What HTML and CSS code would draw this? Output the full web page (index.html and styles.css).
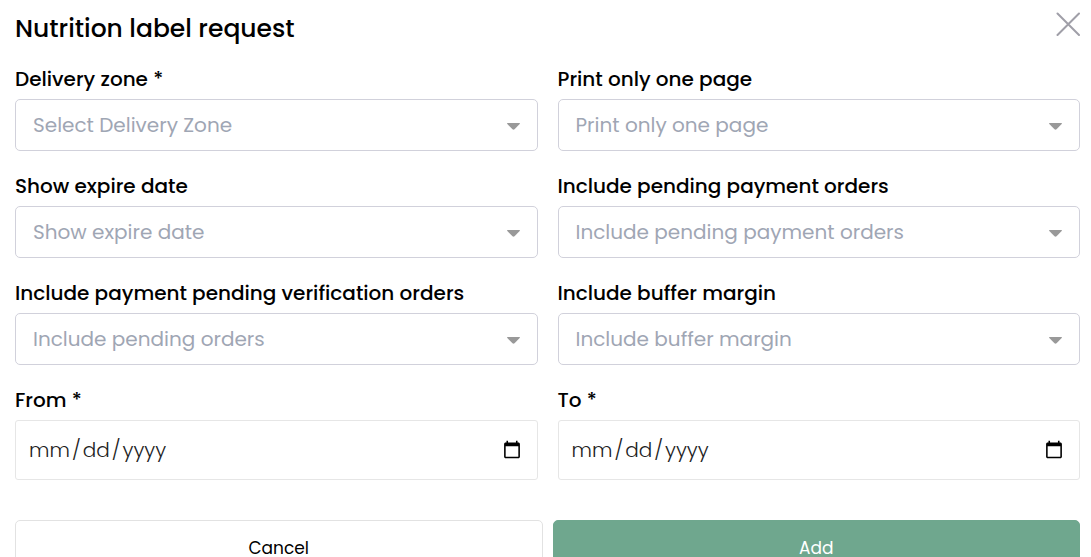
FILE: index.html
```html
<!DOCTYPE html>
<html lang="en">
<head>
    <meta charset="UTF-8">
    <meta name="viewport" content="width=device-width, initial-scale=1.0">
    <title>Nutrition label request</title>
    <link rel="stylesheet" href="styles.css">
</head>
<body>
    <form class="modal">
        <div class="modal-header">
            <h1 class="title">Nutrition label request</h1>
            <button type="button" class="close" aria-label="Close">
                <svg width="24" height="24" viewBox="0 0 24 24" fill="none" stroke="currentColor" stroke-width="2" stroke-linecap="round">
                    <path d="M1.500 1.500l21.500 21.500M23 1.500L1.500 23"/>
                </svg>
            </button>
        </div>

        <div class="fields">
            <div class="field">
                <label for="delivery-zone">Delivery zone *</label>
                <div class="select">
                    <select id="delivery-zone">
                        <option value="">Select Delivery Zone</option>
                    </select>
                    <svg class="arrow" width="13" height="7" viewBox="0 0 13 7"><path d="M0.5 0h12q.7.3.2 1L7.500 6.300q-1 .8-2 0L.3 1Q-.2.300.5 0z"/></svg>
                </div>
            </div>
            <div class="field">
                <label for="one-page">Print only one page</label>
                <div class="select">
                    <select id="one-page">
                        <option value="">Print only one page</option>
                    </select>
                    <svg class="arrow" width="13" height="7" viewBox="0 0 13 7"><path d="M0.5 0h12q.7.3.2 1L7.500 6.300q-1 .8-2 0L.3 1Q-.2.300.5 0z"/></svg>
                </div>
            </div>
            <div class="field">
                <label for="expire-date">Show expire date</label>
                <div class="select">
                    <select id="expire-date">
                        <option value="">Show expire date</option>
                    </select>
                    <svg class="arrow" width="13" height="7" viewBox="0 0 13 7"><path d="M0.5 0h12q.7.3.2 1L7.500 6.300q-1 .8-2 0L.3 1Q-.2.300.5 0z"/></svg>
                </div>
            </div>
            <div class="field">
                <label for="pending-payment">Include pending payment orders</label>
                <div class="select">
                    <select id="pending-payment">
                        <option value="">Include pending payment orders</option>
                    </select>
                    <svg class="arrow" width="13" height="7" viewBox="0 0 13 7"><path d="M0.5 0h12q.7.3.2 1L7.500 6.300q-1 .8-2 0L.3 1Q-.2.300.5 0z"/></svg>
                </div>
            </div>
            <div class="field">
                <label for="pending-verification">Include payment pending verification orders</label>
                <div class="select">
                    <select id="pending-verification">
                        <option value="">Include pending orders</option>
                    </select>
                    <svg class="arrow" width="13" height="7" viewBox="0 0 13 7"><path d="M0.5 0h12q.7.3.2 1L7.500 6.300q-1 .8-2 0L.3 1Q-.2.300.5 0z"/></svg>
                </div>
            </div>
            <div class="field">
                <label for="buffer-margin">Include buffer margin</label>
                <div class="select">
                    <select id="buffer-margin">
                        <option value="">Include buffer margin</option>
                    </select>
                    <svg class="arrow" width="13" height="7" viewBox="0 0 13 7"><path d="M0.5 0h12q.7.3.2 1L7.500 6.300q-1 .8-2 0L.3 1Q-.2.300.5 0z"/></svg>
                </div>
            </div>
            <div class="field">
                <label for="from">From *</label>
                <input type="date" id="from" class="date">
            </div>
            <div class="field">
                <label for="to">To *</label>
                <input type="date" id="to" class="date">
            </div>
        </div>

        <div class="actions">
            <button type="button" class="button">Cancel</button>
            <button type="submit" class="button primary">Add</button>
        </div>
    </form>
</body>
</html>
```
FILE: styles.css
```css
* {
    box-sizing: border-box;
}
body {
    margin: 0;
    background-color: #fff;
    color: #000;
    font-family: Poppins, Inter, sans-serif;
}
.modal {
    max-height: 100vh;
    padding: 11px 11px 0 15px;
    overflow: hidden;
}
.modal-header {
    display: flex;
    justify-content: space-between;
    align-items: flex-start;
    margin-bottom: 17px;
}
.title {
    margin: 0;
    font-size: 25px;
    line-height: 36px;
    font-weight: 500;
}
.close {
    display: flex;
    padding: 1px 0 0;
    border: none;
    background: none;
    color: #a09fa8;
    cursor: pointer;
}
.fields {
    display: grid;
    grid-template-columns: 1fr 1fr;
    gap: 20px;
}
.field {
    display: flex;
    flex-direction: column;
    gap: 5px;
    min-width: 0;
}
.field label {
    font-size: 20px;
    line-height: 30px;
    font-weight: 500;
}
.select {
    position: relative;
}
.select select {
    display: block;
    width: 100%;
    height: 52px;
    padding: 0 40px 0 17px;
    border: 1px solid #d1d1db;
    border-radius: 5px;
    background-color: #fff;
    color: #9fa6b4;
    font-family: inherit;
    font-size: 20px;
    appearance: none;
}
.arrow {
    position: absolute;
    top: 24px;
    right: 18px;
    fill: #999;
    pointer-events: none;
}
.date {
    width: 100%;
    height: 60px;
    padding: 0 13px 0 12px;
    border: 1px solid #e6e6e6;
    border-radius: 3px;
    background-color: #fff;
    color: #222;
    font-family: inherit;
    font-size: 20px;
    font-weight: 300;
}
.date::-webkit-datetime-edit-text {
    padding: 0 1px;
}
.actions {
    display: grid;
    grid-template-columns: 1fr 1fr;
    gap: 10px;
    margin-top: 40px;
}
.button {
    height: 56px;
    border: 1px solid #e2e2e2;
    border-radius: 5px;
    background-color: #fff;
    color: #000;
    font-family: inherit;
    font-size: 17px;
    cursor: pointer;
}
.button.primary {
    border-color: #6fa78e;
    background-color: #6fa78e;
    color: #fff;
}
```
